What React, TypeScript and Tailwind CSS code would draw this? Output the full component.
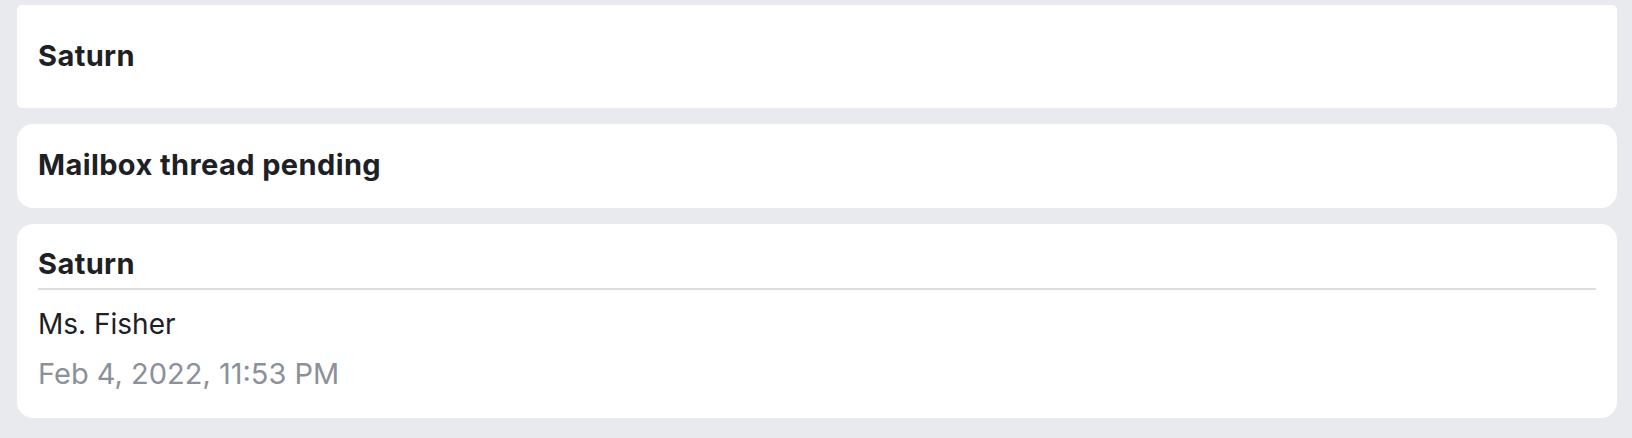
import React from 'react';

interface Item {
  id: string;
  title: string;
  sender?: string;
  date?: string;
}

const items: Item[] = [
  { id: 'a', title: 'Saturn' },
  { id: 'b', title: 'Mailbox thread pending' },
  { id: 'c', title: 'Saturn', sender: 'Ms. Fisher', date: 'Feb 4, 2022, 11:53 PM' },
];

export default function App() {
  return (
    <div
      className="min-h-[438px] w-full bg-[#e9eaee] pt-[5px] pl-[17px] pr-[15px] pb-[22px] flex flex-col gap-4 text-[29px] leading-[34px] text-[#1d2025]"
      style={{ fontFamily: 'Inter, "Noto Sans", "Liberation Sans", sans-serif' }}
    >
      <div className="bg-white rounded-[5px] px-[21px] pt-[34px] pb-[35px]">
        <h3 className="font-bold tracking-[0.4px]">{items[0].title}</h3>
      </div>

      <div className="bg-white rounded-2xl px-[21px] pt-[24px] pb-[26px]">
        <h3 className="font-bold tracking-[0.4px]">{items[1].title}</h3>
      </div>

      <div className="bg-white rounded-2xl px-[21px] pt-[23px] pb-[27px]">
        <h3 className="font-bold tracking-[0.4px]">{items[2].title}</h3>
        <div className="mt-[7px] h-[2px] bg-[#dcdde2]" />
        <p className="mt-[17px] text-[28px]">{items[2].sender}</p>
        <p className="mt-[16px] text-[#8b9099]">{items[2].date}</p>
      </div>
    </div>
  );
}
